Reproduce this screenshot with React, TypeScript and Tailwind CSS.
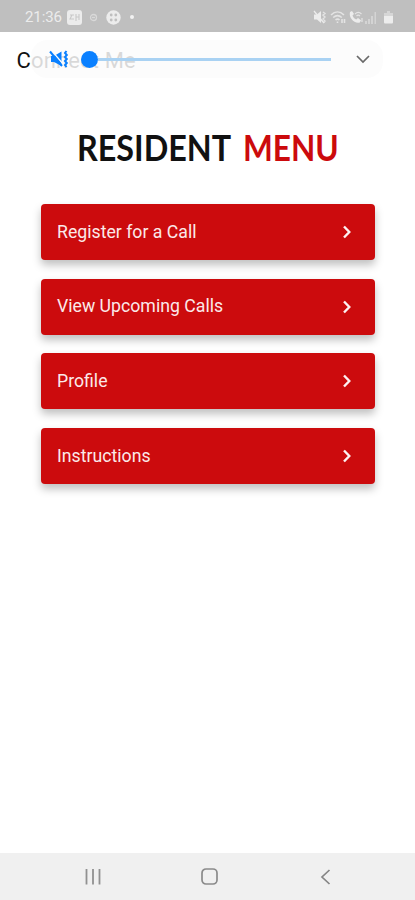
import React from "react";

const menuItems = ["Register for a Call", "View Upcoming Calls", "Profile", "Instructions"];

const StatusBar = () => {
  return (
    <div className="flex h-8 w-full items-center justify-between bg-[#bfbfbf] pt-0.5 pl-[25px] pr-[22px] text-[#ececec]">
      <div className="flex items-center">
        <span className="w-[37px] text-[15px] leading-none tracking-[-0.1px] whitespace-nowrap">21:36</span>
        <svg className="ml-[5px]" width="15" height="15" viewBox="0 0 15 15">
          <rect width="15" height="15" rx="3" fill="#ececec" />
          <path d="M3 5h4M5 5L3 9h4M9 4v7M12 4v6M9 7h3" fill="none" stroke="#c8c8c8" strokeWidth="1.1" />
        </svg>
        <svg className="ml-[7px]" width="9" height="9" viewBox="0 0 9 9" fill="none" stroke="#d9d9d9" strokeWidth="1.3">
          <circle cx="4.5" cy="4.5" r="3" />
          <path d="M3 4.5h3" />
        </svg>
        <svg className="ml-[8px]" width="15" height="15" viewBox="0 0 15 15">
          <circle cx="7.5" cy="7.5" r="7.2" fill="#ececec" />
          <g fill="#bfbfbf">
            <circle cx="5.2" cy="5" r="1.4" />
            <circle cx="9.8" cy="5" r="1.4" />
            <circle cx="5.2" cy="10" r="1.4" />
            <circle cx="9.8" cy="10" r="1.4" />
          </g>
        </svg>
        <span className="ml-[9px] size-[4px] rounded-full bg-[#f2f2f2]"></span>
      </div>

      <div className="flex items-center">
        <svg width="14" height="14" viewBox="0 0 14 14">
          <path d="M1 4.5h3l4-3.5v12L4 9.5H1z" fill="#ececec" />
          <path d="M1 1l10 12" stroke="#ececec" strokeWidth="1.3" />
          <path d="M10 2l2 1.5-2 1.5 2 2-2 2 2 2-1 1.5" fill="none" stroke="#e4e4e4" strokeWidth="1.4" />
        </svg>
        <svg className="ml-[3px]" width="16" height="14" viewBox="0 0 16 14" fill="none" stroke="#e4e4e4" strokeWidth="1.6">
          <path d="M1 5c4-4 9-4 13 0M3.2 7.5c3-2.6 5.6-2.6 8.6 0M5.5 10c1.5-1.2 2.8-1.2 4 0" />
          <path d="M7.5 11.5v1.5M12 9v4M14.5 9v4" />
        </svg>
        <svg className="ml-[2px]" width="15" height="14" viewBox="0 0 15 14">
          <path d="M2 2l2-1 2 3-1.5 1.5c.7 2 1.9 3.2 3.7 4L10 8l3 2.2-1.2 2.2C6.5 14 .5 8 2 2z" fill="#ececec" />
          <path d="M7 4c2-2 4.5-2 6.5 0M8.5 6c1-.9 2.5-.9 3.5 0M14 8v4" fill="none" stroke="#e4e4e4" strokeWidth="1.2" />
        </svg>
        <svg className="ml-[2px]" width="12" height="13" viewBox="0 0 12 13" fill="#d4d4d4">
          <path d="M0 10h2v3H0zM3 8h2v5H3zM6 5h2v8H6zM9.5 1h1.5v12H9.5z" />
        </svg>
        <svg className="ml-[7px]" width="9" height="13" viewBox="0 0 9 13">
          <path d="M3 0h3v2h3v3.5H0V2h3z" fill="#d6d6d6" />
          <path d="M0 5h9v6.5a1 1 0 0 1-1 1H1a1 1 0 0 1-1-1z" fill="#ededed" />
        </svg>
      </div>
    </div>
  );
};

const VolumeSlider = () => {
  return (
    <div className="absolute top-[8px] left-[31px] flex h-[38px] w-[352px] items-center rounded-[16px] bg-[#fbfbfb]/85 pr-[12px] pl-[18px]">
      <svg width="20" height="18" viewBox="0 0 20 18" fill="none">
        <path d="M2 6h3l7.500-4.500v14.500L5 12H2z" fill="#0a80ff" />
        <path d="M2.500 0.500l12 14" stroke="#fbfbfb" strokeWidth="1.300" />
        <path d="M1 1.500l12 14.500" stroke="#0a80ff" strokeWidth="2" />
        <path d="M17.500 1l-1.500 2 1.800 2L16 7l1.800 2L16 11l1.800 2-1.800 2 1.500 2" stroke="#0a80ff" strokeWidth="2" />
      </svg>
      <div className="ml-[12px] flex w-[250px] items-center">
        <span className="size-[17px] shrink-0 rounded-full bg-[#0a80ff]"></span>
        <span className="h-[3px] grow bg-[#a9d2f3]"></span>
      </div>
      <svg className="ml-auto" width="16" height="10" viewBox="0 0 16 10" fill="none" stroke="#696969" strokeWidth="1.7">
        <path d="M2 2l6 6 6-6" />
      </svg>
    </div>
  );
};

const NavBar = () => {
  return (
    <div className="flex h-[47px] w-full items-center justify-between bg-[#f0f0f0] pr-[84px] pl-[85px]">
      <svg width="16" height="16" viewBox="0 0 16 16" stroke="#919191" strokeWidth="1.8">
        <path d="M1.5 0v15.5M8 0v15.5M14.5 0v15.5" />
      </svg>
      <svg className="-ml-[3px]" width="17" height="17" viewBox="0 0 17 17" fill="none" stroke="#8a8a8a" strokeWidth="1.7">
        <rect x="1" y="1" width="15" height="15" rx="4" />
      </svg>
      <svg width="11" height="16" viewBox="0 0 11 16" fill="none" stroke="#858585" strokeWidth="1.7">
        <path d="M9.5 1L2 8l7.500 7" />
      </svg>
    </div>
  );
};

const App = () => {
  return (
    <div className="flex h-[900px] w-[415px] flex-col overflow-hidden bg-white font-['Roboto',sans-serif]">
      <StatusBar />

      <div className="relative flex h-[56px] items-center pl-[16.5px]">
        <p className="pt-0.5 text-[22px] leading-none tracking-[0.15px] text-[#111]">Connect Me</p>
        <VolumeSlider />
      </div>

      <h1 className="mt-[38px] flex h-[44px] items-center pl-[77px] font-['Lato',sans-serif] text-[35.5px] leading-none font-bold whitespace-nowrap">
        <span className="w-[166px] origin-left scale-x-[0.91] text-[#111]">RESIDENT</span>
        <span className="w-[96px] origin-left scale-x-[0.89] text-[#cc0a0c]">MENU</span>
      </h1>

      <div className="mt-[34px] flex flex-col gap-[18.7px] pr-[40px] pl-[41px]">
        {menuItems.map((item) => (
          <button
            key={item}
            className="flex h-[56px] w-full items-center justify-between rounded-[4px] bg-[#cc0b0d] pr-[23px] pl-4 text-[17.7px] text-[#fbe9e9] shadow-[0_5px_9px_rgba(0,0,0,0.25)]"
          >
            <span>{item}</span>
            <svg width="10" height="14" viewBox="0 0 10 14" fill="none" stroke="#fdf2f2" strokeWidth="2.4">
              <path d="M2 1.5L7.3 7 2 12.5" />
            </svg>
          </button>
        ))}
      </div>

      <div className="mt-auto">
        <NavBar />
      </div>
    </div>
  );
};

export default App;
